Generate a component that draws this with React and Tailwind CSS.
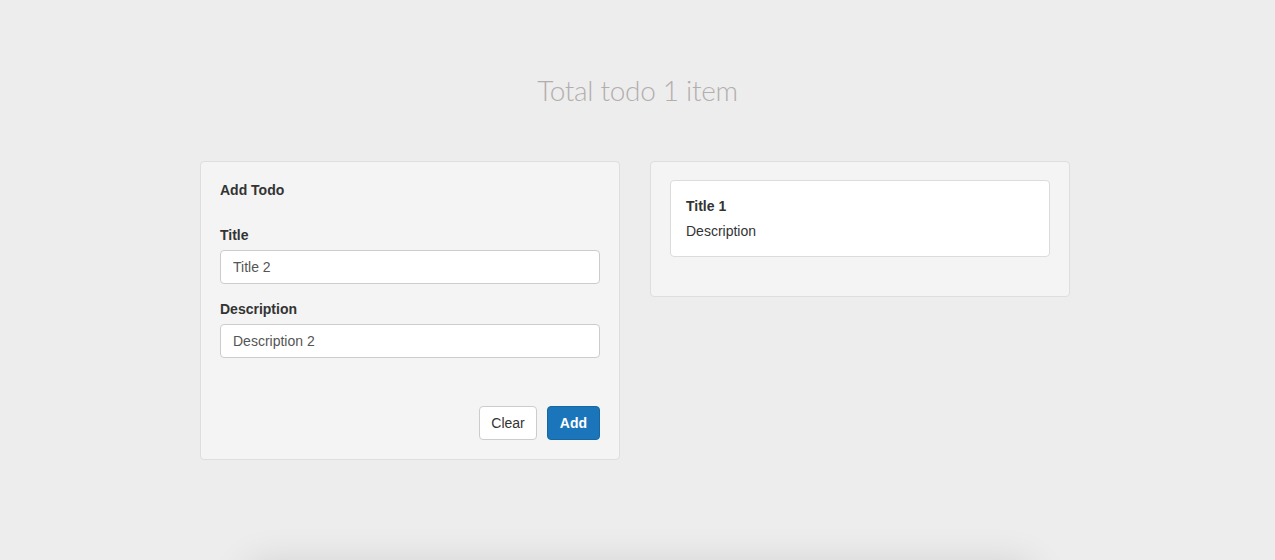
import React from 'react';

function Field({ label, value }) {
    return (
        <div className="mb-[15px]">
            <label className="block text-[14px] leading-[20px] font-bold text-[#333] mb-[5px]">{label}</label>
            <input
                readOnly
                value={value}
                className="block w-full h-[34px] px-[12px] text-[14px] text-[#555] bg-white border border-[#ccc] rounded-[4px] outline-none"
            />
        </div>
    );
}

export default function App() {
    return (
        <div className="h-[560px] bg-[#ededed] overflow-hidden font-['Liberation_Sans',Arial,sans-serif] text-[#333]">
            <h1 className="pt-[70px] text-center text-[28px] leading-[40px] font-light text-[#b3adad] font-['Lato',sans-serif] tracking-[-0.3px]">
                Total todo 1 item
            </h1>

            <div className="mt-[51px] ml-[200px] w-[870px] flex items-start gap-[30px]">
                {/* Add form */}
                <div className="w-[420px] bg-[#f4f4f4] border border-[#dedede] rounded-[4px] px-[19px] pt-[18px] pb-[19px]">
                    <h3 className="text-[14px] leading-[20px] font-bold mb-[25px]">Add Todo</h3>
                    <Field label="Title" value="Title 2" />
                    <Field label="Description" value="Description 2" />
                    <div className="mt-[48px] flex justify-end gap-[10px]">
                        <button className="h-[34px] px-[11px] text-[14px] text-[#333] bg-white border border-[#ccc] rounded-[4px]">Clear</button>
                        <button className="h-[34px] px-[12px] text-[14px] font-bold text-white bg-[#1a75bb] border border-[#16669f] rounded-[4px]">Add</button>
                    </div>
                </div>

                {/* List */}
                <div className="w-[420px] bg-[#f4f4f4] border border-[#dedede] rounded-[4px] px-[19px] pt-[18px] pb-[39px]">
                    <div className="bg-white border border-[#dcdcdc] rounded-[4px] px-[15px] pt-[15px] pb-[15px]">
                        <div className="text-[14px] leading-[20px] font-bold">Title 1</div>
                        <div className="text-[14px] leading-[20px] mt-[5px]">Description</div>
                    </div>
                </div>
            </div>

            <div className="mt-[110px] ml-[250px] w-[780px] h-[60px] bg-[#ededed] shadow-[0_-4px_40px_rgba(0,0,0,0.14)]" />
        </div>
    );
}
